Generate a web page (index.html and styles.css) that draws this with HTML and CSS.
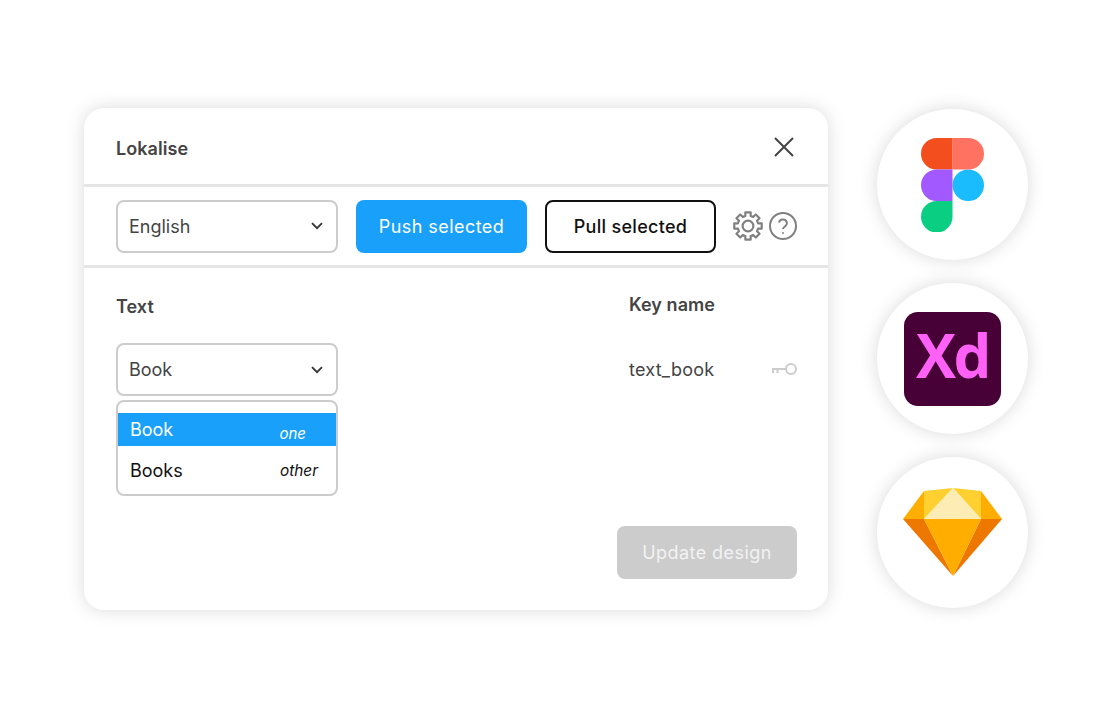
FILE: index.html
```html
<!DOCTYPE html>
<html lang="en">
<head>
<meta charset="utf-8">
<title>Lokalise</title>
<link rel="stylesheet" href="styles.css">
</head>
<body>
<main class="page">
  <section class="card">
    <header class="card-head">
      <h1 class="title">Lokalise</h1>
      <svg class="icon-close" viewBox="0 0 20 20" aria-hidden="true"><path d="M1 1l18 18M19 1L1 19"/></svg>
    </header>
    <div class="toolbar">
      <div class="select"><span>English</span>
        <svg class="chev" viewBox="0 0 12 8" aria-hidden="true"><path d="M1 1.2l5 5 5-5"/></svg>
      </div>
      <button class="btn btn-primary">Push selected</button>
      <button class="btn btn-outline">Pull selected</button>
      <svg class="icon-gear" viewBox="-14.5 -14.5 29 29" aria-hidden="true">
        <circle r="5.2"/>
        <path d="M9.66-2.59L13.25-2.58V2.58L9.66 2.59A10 10 0 0 1 8.66 5L11.19 7.54 7.54 11.19 5 8.66A10 10 0 0 1 2.59 9.66L2.58 13.25H-2.58L-2.59 9.66A10 10 0 0 1-5 8.66L-7.54 11.19-11.19 7.54-8.66 5A10 10 0 0 1-9.66 2.59L-13.25 2.58V-2.58L-9.66-2.59A10 10 0 0 1-8.66-5L-11.19-7.54-7.54-11.19-5-8.66A10 10 0 0 1-2.59-9.66L-2.58-13.25H2.58L2.59-9.66A10 10 0 0 1 5-8.66L7.54-11.19 11.19-7.54 8.66-5A10 10 0 0 1 9.66-2.59Z"/>
      </svg>
      <svg class="icon-help" viewBox="0 0 28 28" aria-hidden="true">
        <circle cx="14" cy="14" r="13"/>
        <path d="M10 10.6a4 4 0 0 1 7.9.9c0 2.6-3.9 3.2-3.9 5.6"/>
        <path class="dot" d="M14 20.2v1.6"/>
      </svg>
    </div>
    <div class="content">
      <div class="columns">
        <div class="col-text">
          <h2 class="label">Text</h2>
          <div class="select"><span>Book</span>
            <svg class="chev" viewBox="0 0 12 8" aria-hidden="true"><path d="M1 1.2l5 5 5-5"/></svg>
          </div>
          <ul class="dropdown">
            <li class="option option-active"><span>Book</span><em class="form form-one">one</em></li>
            <li class="option option-plain"><span>Books</span><em class="form">other</em></li>
          </ul>
        </div>
        <div class="col-key">
          <h2 class="label label-key">Key name</h2>
          <div class="key-row">
            <span>text_book</span>
            <svg class="icon-key" viewBox="0 0 26 14" aria-hidden="true">
              <circle cx="20" cy="7" r="5"/>
              <path d="M15 7H1M2 7v4M6.5 7v4"/>
            </svg>
          </div>
        </div>
      </div>
      <button class="btn btn-update">Update design</button>
    </div>
  </section>

  <aside class="logos">
    <div class="logo-circle">
      <svg class="logo-figma" viewBox="0 0 38 57" aria-hidden="true">
        <path fill="#1ABCFE" d="M19 28.5a9.5 9.5 0 1 1 19 0 9.5 9.5 0 0 1-19 0z"/>
        <path fill="#0ACF83" d="M0 47.5A9.5 9.5 0 0 1 9.5 38H19v9.5a9.5 9.5 0 1 1-19 0z"/>
        <path fill="#FF7262" d="M19 0v19h9.5a9.5 9.5 0 1 0 0-19H19z"/>
        <path fill="#F24E1E" d="M0 9.5A9.5 9.5 0 0 0 9.5 19H19V0H9.5A9.5 9.5 0 0 0 0 9.5z"/>
        <path fill="#A259FF" d="M0 28.5A9.5 9.5 0 0 0 9.5 38H19V19H9.5A9.5 9.5 0 0 0 0 28.5z"/>
      </svg>
    </div>
    <div class="logo-circle">
      <div class="logo-xd">Xd</div>
    </div>
    <div class="logo-circle">
      <svg class="logo-sketch" viewBox="0 0 99 88" aria-hidden="true">
        <path fill="#FFAE00" d="M21 3L0 31h21z"/>
        <path fill="#FFAE00" d="M78 3l21 28H78z"/>
        <path fill="#FFD030" d="M21 3L50 0 21 31z"/>
        <path fill="#FFD030" d="M78 3L50 0l28 31z"/>
        <path fill="#FDEDB5" d="M50 0L21 31h57z"/>
        <path fill="#EE7700" d="M0 31h21l29 57z"/>
        <path fill="#EE7700" d="M99 31H78L50 88z"/>
        <path fill="#FFAE00" d="M21 31h57L50 88z"/>
      </svg>
    </div>
  </aside>
</main>
</body>
</html>
```
FILE: styles.css
```css
* { box-sizing: border-box; }
html, body { margin: 0; padding: 0; background: #fff; }
body {
  font-family: Inter, "Liberation Sans", sans-serif;
  color: #444;
  width: 1110px;
  height: 720px;
  overflow: hidden;
}
.page {
  display: flex;
  align-items: flex-start;
  gap: 49px;
  padding: 108px 0 0 84px;
}
.card {
  width: 744px;
  height: 502px;
  background: #fff;
  border-radius: 20px;
  box-shadow: 0 0 18px rgba(0, 0, 0, .15);
  display: flex;
  flex-direction: column;
}
.card-head {
  height: 79px;
  flex: none;
  padding: 4px 34px 0 32px;
  display: flex;
  align-items: center;
  justify-content: space-between;
  border-bottom: 3px solid #e5e5e5;
}
.title {
  margin: 0;
  font-size: 18px;
  font-weight: 600;
  color: #444;
  letter-spacing: .05px;
}
.icon-close { width: 20px; height: 20px; margin-bottom: 3px; }
.icon-close path { fill: none; stroke: #444; stroke-width: 2; }

.toolbar {
  height: 81px;
  flex: none;
  padding: 0 31px 0 32px;
  display: flex;
  align-items: center;
  border-bottom: 3px solid #e5e5e5;
}
.select {
  width: 222px;
  height: 53px;
  flex: none;
  border: 2px solid #ccc;
  border-radius: 8px;
  padding: 0 13px 0 11px;
  display: flex;
  align-items: center;
  justify-content: space-between;
  font-size: 18px;
  color: #444;
}
.chev { width: 12px; height: 8px; }
.chev path { fill: none; stroke: #333; stroke-width: 1.8; }
.btn {
  font-family: inherit;
  font-size: 18px;
  font-weight: 500;
  height: 53px;
  border-radius: 8px;
  border: 0;
  padding: 0;
  letter-spacing: .3px;
}
.btn-primary {
  width: 171px;
  margin-left: 18px;
  background: #18a0fb;
  color: #fff;
  font-weight: 400;
  letter-spacing: .45px;
}
.btn-outline {
  width: 171px;
  margin-left: 18px;
  background: #fff;
  border: 2px solid #111;
  color: #111;
}
.icon-gear {
  width: 30px;
  height: 30px;
  margin-left: 16.5px;
  flex: none;
}
.icon-gear circle, .icon-gear path {
  fill: none;
  stroke: #808080;
  stroke-width: 2.1;
  stroke-linejoin: round;
}
.icon-help {
  width: 28px;
  height: 28px;
  margin-left: 6.5px;
  flex: none;
}
.icon-help circle, .icon-help path { fill: none; stroke: #808080; stroke-width: 2; }

.content {
  flex: 1;
  padding: 0 31px 31px 32px;
  display: flex;
  flex-direction: column;
}
.columns { display: flex; }
.col-text { width: 513px; padding-top: 28px; }
.col-key { flex: 1; padding-top: 26px; }
.label {
  margin: 0 0 25px;
  font-size: 18px;
  line-height: 22px;
  font-weight: 600;
  color: #444;
  letter-spacing: .05px;
}
.label-key { margin-bottom: 27px; }
.key-row {
  height: 53px;
  display: flex;
  align-items: center;
  justify-content: space-between;
  font-size: 18px;
  color: #444;
  letter-spacing: .25px;
}
.icon-key { width: 26px; height: 14px; margin-bottom: 1px; }
.icon-key circle, .icon-key path { fill: none; stroke: #ccc; stroke-width: 2; }

.dropdown {
  list-style: none;
  width: 222px;
  height: 96px;
  margin: 4px 0 0;
  padding: 11px 0 0;
  border: 2px solid #ccc;
  border-radius: 8px;
  font-size: 18px;
}
.option {
  display: flex;
  justify-content: space-between;
  align-items: center;
  padding-left: 12px;
}
.option-active {
  height: 33px;
  background: #18a0fb;
  color: #fff;
  padding-right: 30px;
}
.option-plain {
  height: 48px;
  color: #111;
  padding-right: 18px;
}
.form { font-size: 15.4px; font-style: italic; }
.form-one { margin-top: 8px; font-size: 15px; }

.btn-update {
  width: 180px;
  height: 53px;
  margin-top: auto;
  align-self: flex-end;
  background: #ccc;
  color: #f2f2f2;
  font-weight: 400;
  letter-spacing: .45px;
}

.logos {
  display: flex;
  flex-direction: column;
  gap: 23px;
  padding-top: 1px;
}
.logo-circle {
  width: 151px;
  height: 151px;
  border-radius: 50%;
  background: #fff;
  box-shadow: 0 0 18px rgba(0, 0, 0, .15);
  display: flex;
  align-items: center;
  justify-content: center;
}
.logo-figma { width: 63px; height: 94.5px; margin-top: 1px; }
.logo-xd {
  width: 97px;
  height: 94px;
  border-radius: 14px;
  background: #470137;
  color: #ff61f6;
  font-family: "Open Sans", sans-serif;
  font-weight: 700;
  font-size: 60px;
  line-height: 86px;
  text-align: center;
  letter-spacing: -2.5px;
}
.logo-sketch { width: 99px; height: 88px; margin-bottom: 2px; }
```
